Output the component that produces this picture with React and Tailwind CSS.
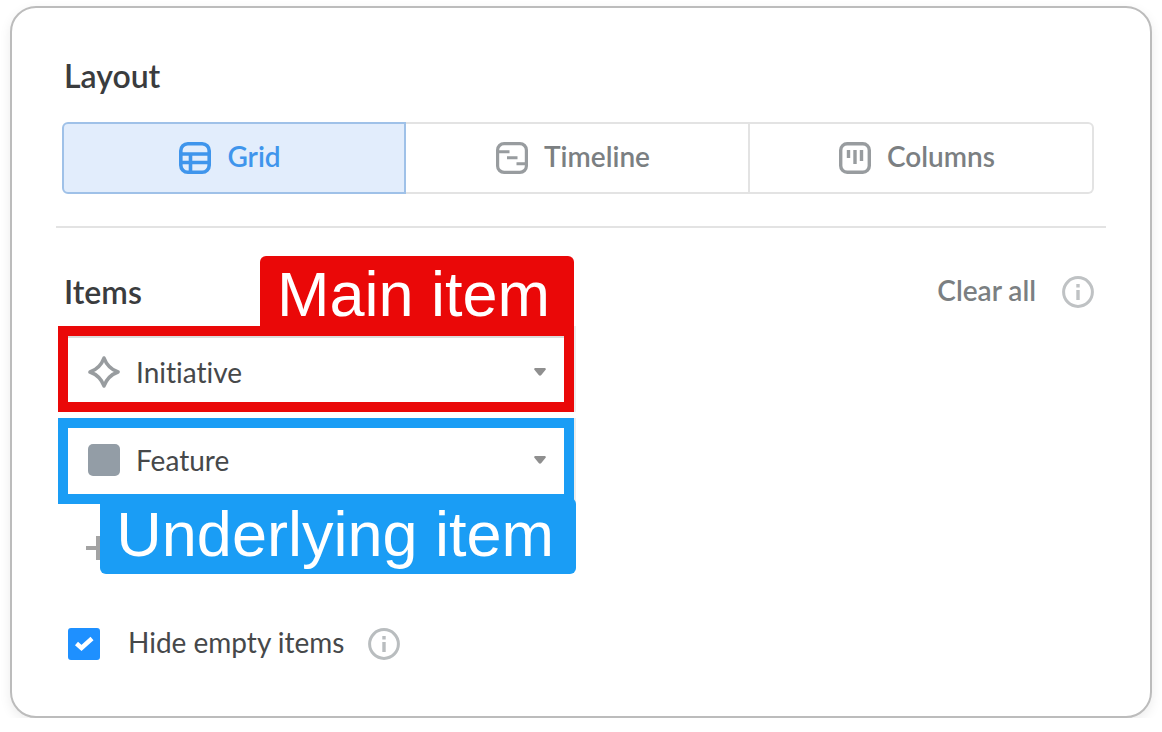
import { useState } from 'react';

function GridIcon() {
  return (
    <svg className="size-8 shrink-0" viewBox="0 0 32 32" fill="none" stroke="currentColor" strokeWidth="3.6" aria-hidden="true">
      <rect x="1.8" y="1.8" width="28.4" height="28.4" rx="7" />
      <path d="M2 12h28M2 20.5h28M11.5 12v18" />
    </svg>
  );
}

function TimelineIcon() {
  return (
    <svg className="size-8 shrink-0 text-[#989c9f]" viewBox="0 0 32 32" fill="none" stroke="currentColor" strokeWidth="3" aria-hidden="true">
      <rect x="1.6" y="1.6" width="28.8" height="28.8" rx="6.5" strokeWidth="3.2" />
      <path d="M3 9.8h10.5M11 15.8h10.5M20.5 21.8h9" />
    </svg>
  );
}

function ColumnsIcon() {
  return (
    <svg className="size-8 shrink-0 text-[#989c9f]" viewBox="0 0 32 32" fill="none" stroke="currentColor" strokeWidth="3" aria-hidden="true">
      <rect x="1.7" y="1.7" width="28.6" height="28.6" rx="6.5" strokeWidth="3.4" />
      <path d="M9.5 8v8M16 8v14M22.5 8v11" strokeWidth="3.4" />
    </svg>
  );
}

function InfoIcon() {
  return (
    <svg className="size-8" viewBox="0 0 32 32" fill="none" stroke="currentColor" strokeWidth="3" aria-hidden="true">
      <circle cx="16" cy="16" r="14.4" />
      <path d="M16 8v3.5M16 14v10" strokeWidth="3.4" />
    </svg>
  );
}

function InitiativeIcon() {
  return (
    <svg className="size-8 shrink-0 text-[#989c9f]" viewBox="0 0 32 32" fill="none" stroke="currentColor" strokeWidth="3.6" strokeLinejoin="round" aria-hidden="true">
      <path d="M16 2C18.500 9 23 13.500 30 16 23 18.500 18.500 23 16 30 13.500 23 9 18.500 2 16 9 13.500 13.500 9 16 2Z" />
    </svg>
  );
}

function Caret() {
  return (
    <svg className="h-2 w-3 shrink-0 text-[#8f8f8f]" viewBox="0 0 12 8" fill="currentColor" aria-hidden="true">
      <path d="M1 0h10q1.300.6.6 1.800L7.300 7Q6 8.400 4.700 7L.4 1.800Q-.3.6 1 0Z" />
    </svg>
  );
}

const layouts = [
  { id: 'grid', label: 'Grid', Icon: GridIcon },
  { id: 'timeline', label: 'Timeline', Icon: TimelineIcon },
  { id: 'columns', label: 'Columns', Icon: ColumnsIcon },
];

const itemTypes = ['Initiative', 'Feature'];

function ItemSelect({ label, icon, defaultValue, className }) {
  return (
    <div className={`flex h-full items-center pr-[18px] pl-5 ${className}`}>
      {icon}
      <select
        aria-label={label}
        defaultValue={defaultValue}
        className="ml-4 h-10 min-w-0 flex-1 appearance-none bg-transparent pb-1 text-[#46484a] outline-none"
      >
        {itemTypes.map((type) => (
          <option key={type}>{type}</option>
        ))}
      </select>
      <Caret />
    </div>
  );
}

export default function App() {
  const [layout, setLayout] = useState('grid');
  const [hideEmpty, setHideEmpty] = useState(true);

  return (
    <main className="mx-[10px] mt-[6px] rounded-[26px] border-2 border-[#bcbcbc] bg-white px-11 pt-12 pb-[52px] font-['Lato',sans-serif] text-[28px] leading-10 shadow-[0_4px_12px_rgba(0,0,0,0.08)] [font-variant-ligatures:none]">
      <h2 className="ml-2 text-[32px] font-semibold text-[#3a3c3e]">Layout</h2>

      <div className="mt-[26px] mr-3 ml-[6px] grid h-[72px] grid-cols-3">
        {layouts.map(({ id, label, Icon }) => (
          <button
            key={id}
            type="button"
            aria-pressed={layout === id}
            onClick={() => setLayout(id)}
            className={`flex items-center justify-center gap-4 border-y-2 border-r-2 pr-2 font-semibold first:rounded-l-md first:border-l-2 last:rounded-r-md ${
              layout === id
                ? 'border-[#9fc1e8] bg-[#e2edfc] text-[#3f95ec]'
                : 'border-[#e3e3e3] text-[#7b7f82]'
            }`}
          >
            <Icon />
            <span className="pb-1">{label}</span>
          </button>
        ))}
      </div>

      <hr className="mt-8 border-t-2 border-[#e3e3e3]" />

      <div className="mt-11 mr-3 ml-2 flex h-10 items-center">
        <h2 className="text-[32px] font-semibold text-[#3a3c3e]">Items</h2>
        <button type="button" className="ml-auto pb-1 font-semibold text-[#7b7f82]">Clear all</button>
        <button type="button" aria-label="About items" className="ml-[26px] text-[#bfc2c4]">
          <InfoIcon />
        </button>
      </div>

      <div className="mt-[14px] ml-[2px] flex w-[516px] max-w-full flex-col gap-[6px]">
        <div className="relative h-[86px] border-10 border-[#ea0808] shadow-[2px_0_0_#ededed]">
          <ItemSelect
            label="Main item"
            icon={<InitiativeIcon />}
            defaultValue="Initiative"
            className="border-t-2 border-[#dcdcdc] pt-1"
          />
          <span className="absolute -top-20 -right-[10px] h-20 rounded-t-md bg-[#ea0808] pr-6 pl-[17px] font-['Liberation_Sans',sans-serif] text-[63px] leading-[76px] whitespace-nowrap text-white">
            Main item
          </span>
        </div>
        <div className="relative h-[86px] border-10 border-[#1a9df5] shadow-[2px_0_0_#ededed]">
          <ItemSelect
            label="Underlying item"
            icon={<span className="size-8 shrink-0 rounded-[5px] bg-[#939da6]" />}
            defaultValue="Feature"
            className="pb-[2px]"
          />
          <span className="absolute top-[70px] -right-3 z-10 h-[76px] rounded-md bg-[#1a9df5] pr-[22px] pl-4 font-['Liberation_Sans',sans-serif] text-[63px] leading-[72px] whitespace-nowrap text-white">
            Underlying item
          </span>
        </div>
      </div>

      <button type="button" aria-label="Add item" className="mt-6 ml-[30px] flex h-10 items-center text-[#a3a3a3]">
        <svg className="size-6" viewBox="0 0 24 24" stroke="currentColor" strokeWidth="4" aria-hidden="true">
          <path d="M12 0v24M0 12h24" />
        </svg>
      </button>

      <div className="mt-14 ml-3 flex h-10 items-center">
        <label className="flex items-center gap-7 text-[#46484a]">
          <span className="grid size-8 place-items-center">
            <input
              type="checkbox"
              checked={hideEmpty}
              onChange={(e) => setHideEmpty(e.target.checked)}
              className="col-start-1 row-start-1 size-8 appearance-none rounded-[3px] border-2 border-[#c4c4c4] checked:border-[#1e90ff] checked:bg-[#1e90ff]"
            />
            {hideEmpty && (
              <svg className="pointer-events-none col-start-1 row-start-1 size-8" viewBox="0 0 32 32" fill="none" stroke="white" strokeWidth="4.5" aria-hidden="true">
                <path d="M8.500 15.500l5 4.500L24 10.500" />
              </svg>
            )}
          </span>
          <span className="pb-1">Hide empty items</span>
        </label>
        <button type="button" aria-label="About hiding empty items" className="ml-6 text-[#b9bdbf]">
          <InfoIcon />
        </button>
      </div>
    </main>
  );
}
